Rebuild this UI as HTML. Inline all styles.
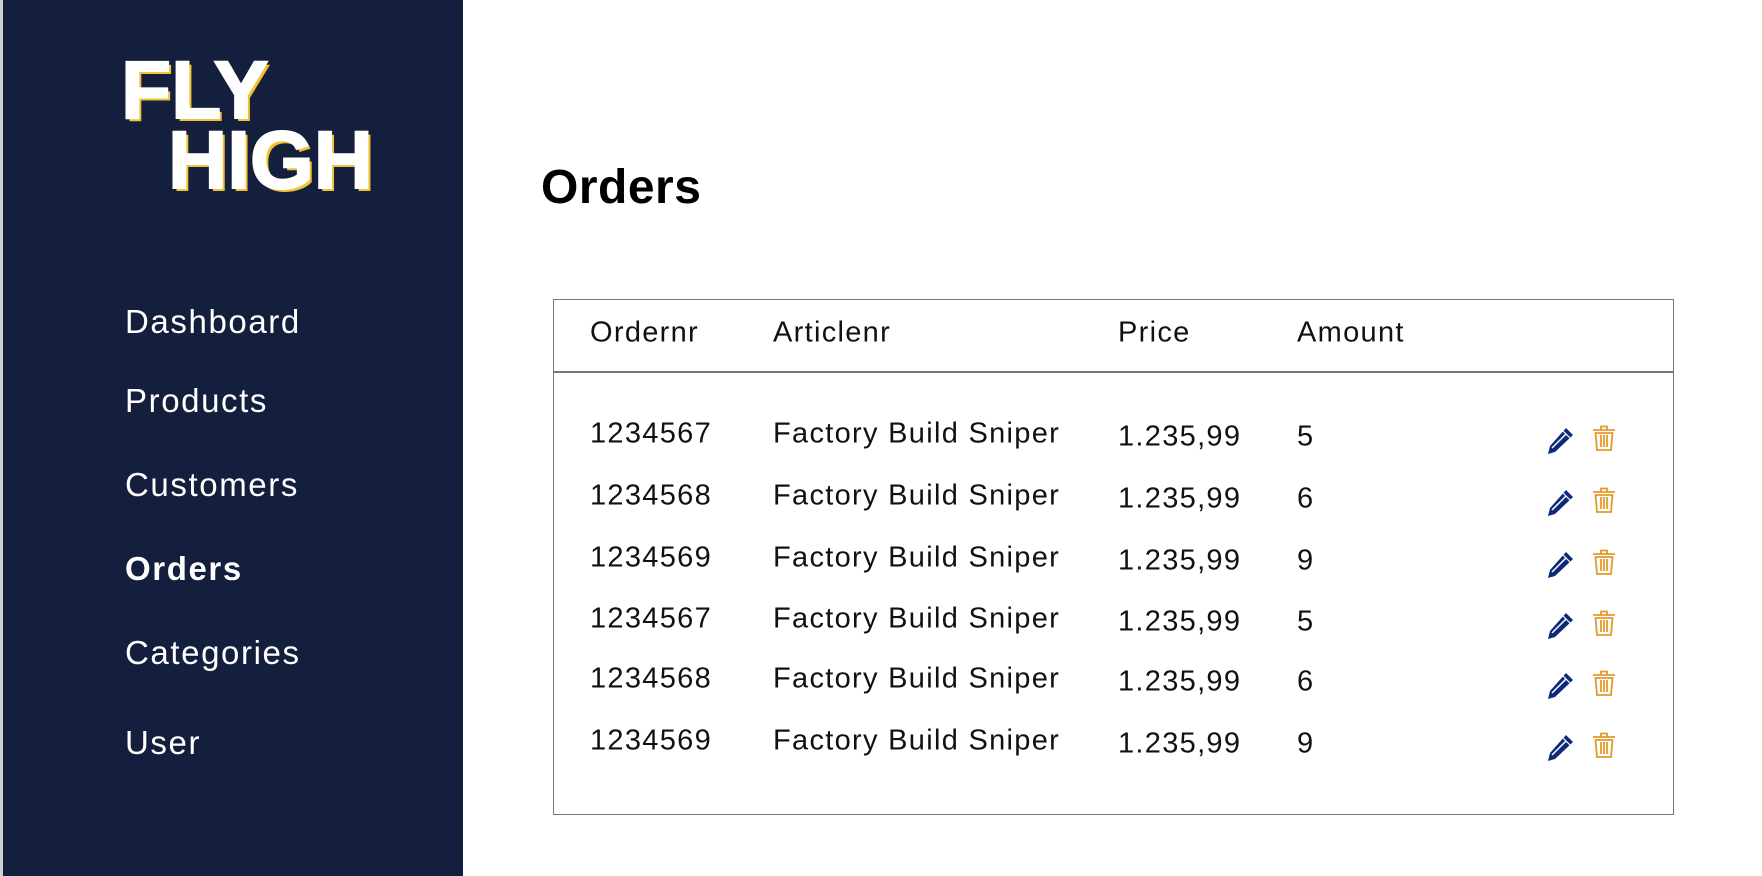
<!DOCTYPE html>
<html><head><meta charset="utf-8"><style>
body{margin:0;width:1762px;height:876px;background:#fff;font-family:"Liberation Sans",sans-serif;position:relative;overflow:hidden}
.side{position:absolute;left:0;top:0;width:463px;height:876px;background:#141e3d;border-left:3px solid #d0d0d0;box-sizing:border-box}
.logo{position:absolute;font-weight:bold;font-size:82px;color:#fff;-webkit-text-stroke:2px #fff;text-shadow:3px 3px 0 #f2c230;line-height:1;letter-spacing:0px}
.nav{position:absolute;left:122px;color:#fff;font-size:33px;letter-spacing:1.6px;transform:translateY(-50%)}
h1{position:absolute;left:541px;top:160px;margin:0;font-size:48px;font-weight:bold;letter-spacing:0.5px}
.box{position:absolute;left:553px;top:299px;width:1121px;height:516px;border:1.5px solid #777;box-sizing:border-box}
.hl{position:absolute;left:553px;top:371px;width:1121px;height:1.5px;background:#777}
.t{position:absolute;font-size:29px;color:#111;transform:translateY(-50%);white-space:nowrap;letter-spacing:1.3px}
.ic{position:absolute;transform:translateY(-50%)}
</style></head><body>
<div class="side">
<div class="logo" style="left:118px;top:50px">FLY</div>
<div class="logo" style="left:165px;top:120px">HIGH</div>
<div class="nav" style="top:322px">Dashboard</div>
<div class="nav" style="top:401px">Products</div>
<div class="nav" style="top:485px">Customers</div>
<div class="nav" style="top:569px;font-weight:bold">Orders</div>
<div class="nav" style="top:653px">Categories</div>
<div class="nav" style="top:743px">User</div>
</div>
<h1>Orders</h1>
<div class="box"></div><div class="hl"></div>
<div class="t" style="left:590px;top:333px">Ordernr</div>
<div class="t" style="left:773px;top:333px">Articlenr</div>
<div class="t" style="left:1118px;top:333px">Price</div>
<div class="t" style="left:1297px;top:333px">Amount</div>
<div id="rows"></div>
<script>
var r=[["1234567",434,"5"],["1234568",496,"6"],["1234569",558,"9"],["1234567",619,"5"],["1234568",679,"6"],["1234569",741,"9"]];
var h="";
r.forEach(function(x){var y=x[1];
h+='<div class="t" style="left:590px;top:'+y+'px">'+x[0]+'</div>';
h+='<div class="t" style="left:773px;top:'+y+'px">Factory Build Sniper</div>';
h+='<div class="t" style="left:1118px;top:'+(y+3)+'px">1.235,99</div>';
h+='<div class="t" style="left:1297px;top:'+(y+3)+'px">'+x[2]+'</div>';
h+='<svg class="ic" style="left:1546px;top:'+(y+6)+'px" width="30" height="30" viewBox="0 0 30 30"><path d="M20 3 L27 10 L9 27 L2 29 L4 21 Z" fill="#0d2a7a"/><path d="M6 23 L20 9" stroke="#fff" stroke-width="1.5"/><path d="M17 6 L24 13" stroke="#fff" stroke-width="1.2"/></svg>';
h+='<svg class="ic" style="left:1591px;top:'+(y+4)+'px" width="26" height="28" viewBox="0 0 26 28" fill="none" stroke="#e39a2a" stroke-width="1.8"><path d="M2 6 H24 M10 6 V2.5 H16 V6 M4.5 9 L6 26 H20 L21.5 9 Z M10 11 V23 M13 11 V23 M16 11 V23"/></svg>';
});
document.getElementById("rows").innerHTML=h;
</script>
</body></html>
